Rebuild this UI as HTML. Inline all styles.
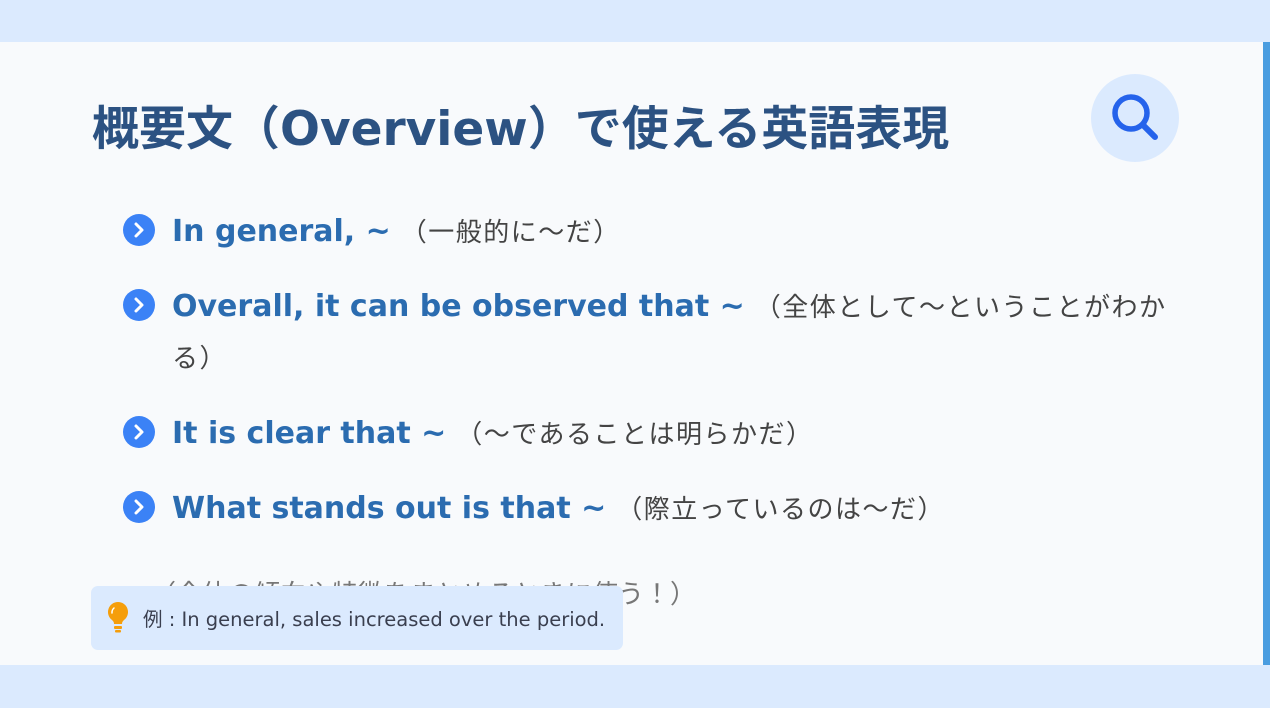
<!DOCTYPE html>
<html><head><meta charset="utf-8"><style>
*{margin:0;padding:0;box-sizing:border-box}
body{width:1270px;height:708px;background:#dbeafe;position:relative;overflow:hidden;font-family:"DejaVu Sans","Noto Sans CJK JP",sans-serif}
.card{position:absolute;left:0;top:42px;width:1270px;height:623px;background:#f8fafc;border-right:7px solid #4a9de0}
h1{position:absolute;left:92px;top:100px;font-size:47px;font-weight:bold;color:#2c5282;white-space:nowrap;letter-spacing:0px;line-height:60px}
.srch{position:absolute;left:1091px;top:74px;width:88px;height:88px;border-radius:50%;background:#dbeafe}
.b{position:absolute;left:123px;width:32px;height:32px;border-radius:50%;background:#3b82f6}
.t{position:absolute;left:172px;white-space:nowrap;line-height:40px}
.e{font-size:30px;font-weight:bold;color:#2b6cb0}
.j{font-size:26px;color:#444;margin-left:10px;letter-spacing:1.5px}
.note{position:absolute;left:150px;top:574px;font-size:26px;color:#777;white-space:nowrap}
.ex{position:absolute;left:91px;top:586px;width:532px;height:64px;background:#dbeafe;border-radius:7px;font-size:19.5px;color:#3a3f4f;padding:17px 0 0 52px;white-space:nowrap}
</style></head><body>
<div class="card"></div>
<h1>概要文（Overview）で使える英語表現</h1>
<div class="srch"><svg width="88" height="88" viewBox="0 0 88 88"><circle cx="40" cy="39" r="16" fill="none" stroke="#2563eb" stroke-width="5.5"/><line x1="52" y1="51" x2="64" y2="63" stroke="#2563eb" stroke-width="6" stroke-linecap="round"/></svg></div>

<div class="b" style="top:214px"><svg width="32" height="32"><path d="M13 10l6 6-6 6" fill="none" stroke="#fff" stroke-width="3" stroke-linecap="round" stroke-linejoin="round"/></svg></div>
<div class="t" style="top:212px"><span class="e">In general, ~</span><span class="j">（一般的に〜だ）</span></div>

<div class="b" style="top:289px"><svg width="32" height="32"><path d="M13 10l6 6-6 6" fill="none" stroke="#fff" stroke-width="3" stroke-linecap="round" stroke-linejoin="round"/></svg></div>
<div class="t" style="top:287px"><span class="e">Overall, it can be observed that ~</span><span class="j">（全体として〜ということがわか</span></div>
<div class="t" style="top:339px"><span class="j" style="margin-left:0">る）</span></div>

<div class="b" style="top:416px"><svg width="32" height="32"><path d="M13 10l6 6-6 6" fill="none" stroke="#fff" stroke-width="3" stroke-linecap="round" stroke-linejoin="round"/></svg></div>
<div class="t" style="top:414px"><span class="e">It is clear that ~</span><span class="j">（〜であることは明らかだ）</span></div>

<div class="b" style="top:491px"><svg width="32" height="32"><path d="M13 10l6 6-6 6" fill="none" stroke="#fff" stroke-width="3" stroke-linecap="round" stroke-linejoin="round"/></svg></div>
<div class="t" style="top:489px"><span class="e">What stands out is that ~</span><span class="j">（際立っているのは〜だ）</span></div>

<div class="note">（全体の傾向や特徴をまとめるときに使う！）</div>
<div class="ex"><svg style="position:absolute;left:15px;top:14px" width="24" height="34" viewBox="0 0 24 34"><path d="M12 2a10 10 0 0 0-6 18c1.5 1.3 2 2.5 2 4h8c0-1.5.5-2.7 2-4A10 10 0 0 0 12 2z" fill="#f59e0b"/><rect x="8" y="26" width="8" height="3" rx="1" fill="#f59e0b"/><rect x="9" y="30" width="6" height="2.5" rx="1" fill="#f59e0b"/><path d="M8 8a6 6 0 0 0-2 5" stroke="#fff" stroke-width="1.5" fill="none" stroke-linecap="round"/></svg>例 : In general, sales increased over the period.</div>
</body></html>
